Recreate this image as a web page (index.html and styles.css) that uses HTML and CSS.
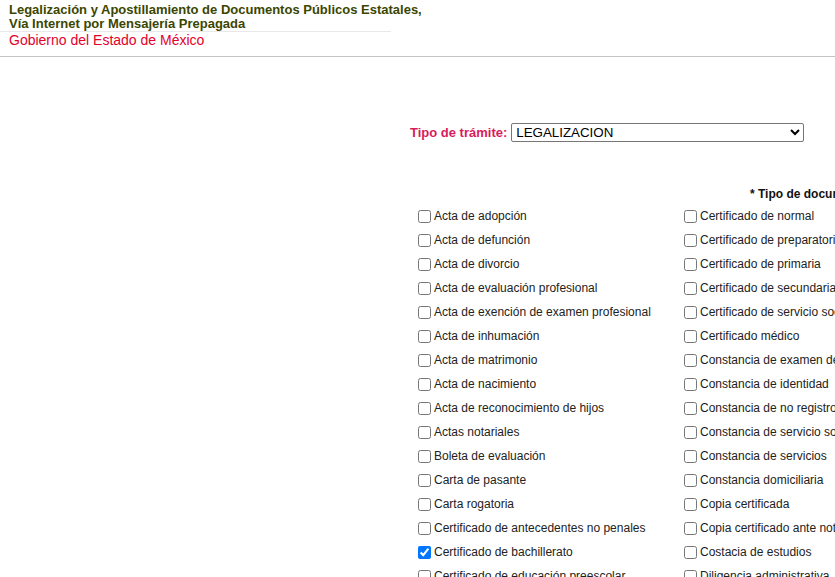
FILE: index.html
```html
<!DOCTYPE html>
<html lang="es">
<head>
    <meta charset="UTF-8">
    <meta name="viewport" content="width=device-width, initial-scale=1.0">
    <title>Legalización y Apostillamiento</title>
    <link rel="stylesheet" href="styles.css">
</head>
<body>
<div class="header">
    <div class="title">Legalización y Apostillamiento de Documentos Públicos Estatales,<br>Vía Internet por Mensajería Prepagada</div>
    <div class="subtitle">Gobierno del Estado de México</div>
</div>
<div class="rule"></div>

<form class="tramite-form">
    <div class="tramite">
        <label for="tipo-tramite">Tipo de trámite:</label>
        <select id="tipo-tramite" name="tipo-tramite">
            <option>LEGALIZACION</option>
            <option>APOSTILLA</option>
        </select>
    </div>

    <div class="docs">
        <div class="docs-title">* Tipo de documento a legalizar:</div>
        <div class="docs-grid">
            <label><input type="checkbox"> Acta de adopción</label>
            <label><input type="checkbox"> Certificado de normal</label>
            <label><input type="checkbox"> Acta de defunción</label>
            <label><input type="checkbox"> Certificado de preparatoria</label>
            <label><input type="checkbox"> Acta de divorcio</label>
            <label><input type="checkbox"> Certificado de primaria</label>
            <label><input type="checkbox"> Acta de evaluación profesional</label>
            <label><input type="checkbox"> Certificado de secundaria</label>
            <label><input type="checkbox"> Acta de exención de examen profesional</label>
            <label><input type="checkbox"> Certificado de servicio social</label>
            <label><input type="checkbox"> Acta de inhumación</label>
            <label><input type="checkbox"> Certificado médico</label>
            <label><input type="checkbox"> Acta de matrimonio</label>
            <label><input type="checkbox"> Constancia de examen de grado</label>
            <label><input type="checkbox"> Acta de nacimiento</label>
            <label><input type="checkbox"> Constancia de identidad</label>
            <label><input type="checkbox"> Acta de reconocimiento de hijos</label>
            <label><input type="checkbox"> Constancia de no registro</label>
            <label><input type="checkbox"> Actas notariales</label>
            <label><input type="checkbox"> Constancia de servicio social</label>
            <label><input type="checkbox"> Boleta de evaluación</label>
            <label><input type="checkbox"> Constancia de servicios</label>
            <label><input type="checkbox"> Carta de pasante</label>
            <label><input type="checkbox"> Constancia domiciliaria</label>
            <label><input type="checkbox"> Carta rogatoria</label>
            <label><input type="checkbox"> Copia certificada</label>
            <label><input type="checkbox"> Certificado de antecedentes no penales</label>
            <label><input type="checkbox"> Copia certificado ante notario</label>
            <label><input type="checkbox" checked> Certificado de bachillerato</label>
            <label><input type="checkbox"> Costacia de estudios</label>
            <label><input type="checkbox"> Certificado de educación preescolar</label>
            <label><input type="checkbox"> Diligencia administrativa</label>
        </div>
    </div>
</form>
</body>
</html>
```

FILE: styles.css
```css
html {
    overflow: hidden;
}

body {
    margin: 0;
    font-family: "Liberation Sans", Arial, sans-serif;
    background-color: #ffffff;
    color: #222222;
}

.header {
    width: 391px;
}

.title {
    padding: 3px 0 0 9px;
    font-size: 13px;
    line-height: 14px;
    font-weight: bold;
    color: #3b4600;
    border-bottom: 1px solid #e8e8e8;
    white-space: nowrap;
}

.subtitle {
    padding-left: 9px;
    font-size: 14px;
    line-height: 16px;
    color: #e4002b;
}

.rule {
    margin-top: 8px;
    border-top: 1px solid #c4c4c4;
}

.tramite {
    display: flex;
    align-items: center;
    gap: 4px;
    margin-top: 66px;
    padding-left: 410px;
}

.tramite label {
    font-size: 13px;
    font-weight: bold;
    color: #d81b5c;
}

.tramite select {
    width: 293px;
    height: 19px;
    margin: 0;
    font-family: "Liberation Sans", Arial, sans-serif;
    font-size: 13.33px;
    color: #000000;
    background-color: #ffffff;
    border: 1px solid #767676;
    border-radius: 2px;
}

.docs {
    margin-top: 42px;
    padding-left: 414px;
    width: 800px;
}

.docs-title {
    padding-left: 336px;
    font-size: 12px;
    line-height: 20px;
    font-weight: bold;
    color: #111111;
    white-space: nowrap;
}

.docs-grid {
    display: grid;
    grid-template-columns: 266px 266px;
    grid-auto-rows: 24px;
}

.docs-grid label {
    display: flex;
    align-items: center;
    font-size: 12px;
    white-space: nowrap;
}

.docs-grid input {
    width: 13px;
    height: 13px;
    margin: 0 3px 0 4px;
}
```
